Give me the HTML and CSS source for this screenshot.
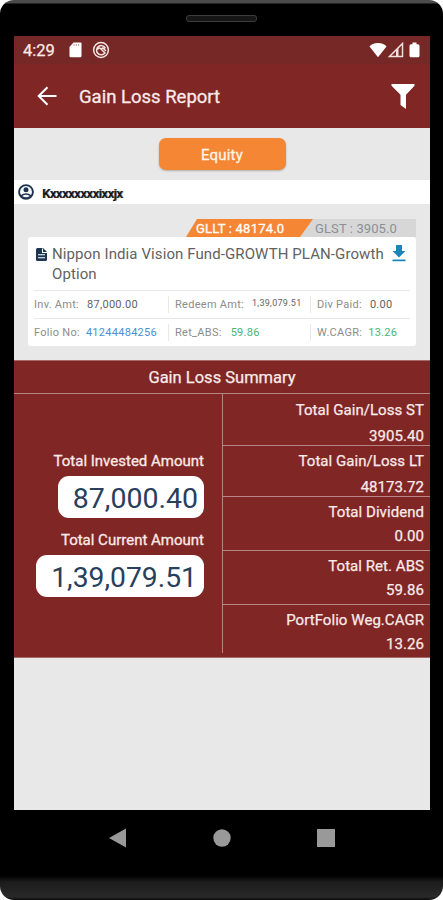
FILE: index.html
```html
<!DOCTYPE html>
<html lang="en">

<head>
    <meta charset="UTF-8">
    <title>Gain Loss Report</title>
    <link rel="stylesheet" href="styles.css">
</head>

<body>
    <div class="phone">
        <div class="speaker"></div>
        <div class="screen">
            <div class="status">
                <span class="time">4:29</span>
                <svg class="sd" width="13" height="16" viewBox="0 0 13 16"><path d="M4.5 0.5H11.5Q12.5 0.5 12.5 1.5V14Q12.5 15.3 11.2 15.3H1.8Q0.5 15.3 0.5 14V5Z" fill="#fff"/><path d="M5 2v2M7.300 2v2M9.600 2v2" stroke="#b98584" stroke-width=".8"/></svg>
                <svg class="app" width="18" height="18" viewBox="0 0 18 18" fill="none" stroke="#f5e3e1" stroke-width="1.5"><circle cx="9" cy="9" r="7.4"/><path d="M12.400 12.500A4.600 4.600 0 1 1 13.400 7.400M5.500 8.500Q7 6 9 8l4.500 4.500M9 8l2-1 3 3"/></svg>
                <svg class="signals" width="53" height="16" viewBox="0 0 53 16"><path d="M0.5 4.5Q3 1 9 1t8.500 3.500L9 15.200Z" fill="#fff"/><path d="M20.500 14.500L33.500 1.500V14.500Z" fill="none" stroke="#f3dedc" stroke-width="1.500"/><path d="M27 14V8.500L29.500 6v8Z" fill="#f3dedc"/><path d="M43.500 .5h4v1.700h1.500q1.500 0 1.500 1.500v10q0 1.600-1.500 1.600h-7q-1.500 0-1.500-1.600v-10q0-1.500 1.500-1.500h1.500Z" fill="#fff"/></svg>
            </div>
            <div class="bar">
                <svg class="back" width="20" height="20" viewBox="0 0 20 20" fill="none" stroke="#fff" stroke-width="2"><path d="M19.500 10H2M10.500 1.200L1.700 10l8.800 8.800"/></svg>
                <h1>Gain Loss Report</h1>
                <svg class="filter" width="24" height="27" viewBox="0 0 24 27"><path d="M0.500 1h23v1.800L15 11.700V26L9.500 22V11.700L0.500 2.800Z" fill="#fff"/></svg>
            </div>

            <div class="type"><button>Equity</button></div>

            <div class="user">
                <svg width="16" height="16" viewBox="0 0 16 16"><circle cx="8" cy="8" r="6.900" fill="#fff" stroke="#1d3450" stroke-width="1.900"/><circle cx="8" cy="5.700" r="2.500" fill="#1d3450"/><path d="M2.500 11.300Q5 9.200 8 9.200t5.500 2.100Q11.500 14.500 8 14.500T2.500 11.300Z" fill="#1d3450"/><path d="M4.200 11.900Q8 9.800 11.800 11.900 8 14.500 4.200 11.900Z" fill="#fff"/></svg>
                <span class="name">Kxxxxxxxxixxjx</span>
            </div>

            <div class="holding">
                <div class="tabs">
                    <span class="gllt">GLLT : 48174.0</span>
                    <span class="glst">GLST : 3905.0</span>
                </div>
                <div class="card">
                    <div class="fund">
                        <svg class="doc" width="11" height="13" viewBox="0 0 11 13"><path d="M1.500 0H7l4 4v7.500Q11 13 9.500 13h-8Q0 13 0 11.500v-10Q0 0 1.500 0Z" fill="#1d3450"/><path d="M6.500 .5v4H11M2 6.800h7M2 9.800h7" fill="none" stroke="#fff" stroke-width="1.100"/></svg>
                        <p>Nippon India Vision Fund-GROWTH PLAN-Growth<br>Option</p>
                        <svg class="down" width="14" height="18" viewBox="0 0 14 18" fill="#1a86ba"><path d="M4 1h6v6h3.500L7 13.500.5 7h3.500ZM0.500 15.500h13v1.800h-13Z"/></svg>
                    </div>
                    <div class="row">
                        <div class="cell"><label>Inv. Amt:</label><b class="inv">87,000.00</b></div>
                        <div class="cell"><label>Redeem Amt:</label><b class="small">1,39,079.51</b></div>
                        <div class="cell"><label>Div Paid:</label><b class="div">0.00</b></div>
                    </div>
                    <div class="row">
                        <div class="cell"><label>Folio No:</label><b class="blue">41244484256</b></div>
                        <div class="cell"><label>Ret_ABS:</label><b class="green">59.86</b></div>
                        <div class="cell"><label>W.CAGR:</label><b class="green cagr">13.26</b></div>
                    </div>
                </div>
            </div>

            <div class="summary">
                <h2>Gain Loss Summary</h2>
                <div class="totals">
                    <div class="amounts">
                        <p>Total Invested Amount</p>
                        <strong>87,000.40</strong>
                        <p>Total Current Amount</p>
                        <strong class="current">1,39,079.51</strong>
                    </div>
                    <div class="list">
                        <div><span>Total Gain/Loss ST</span><span>3905.40</span></div>
                        <div><span>Total Gain/Loss LT</span><span>48173.72</span></div>
                        <div><span>Total Dividend</span><span>0.00</span></div>
                        <div><span>Total Ret. ABS</span><span>59.86</span></div>
                        <div><span>PortFolio Weg.CAGR</span><span>13.26</span></div>
                    </div>
                </div>
            </div>
        </div>
        <div class="nav">
            <svg width="17" height="20" viewBox="0 0 17 20"><path d="M0 10L17 0.500v19Z" fill="#999"/></svg>
            <svg width="18" height="18" viewBox="0 0 18 18"><circle cx="9" cy="9" r="8.700" fill="#999"/></svg>
            <svg width="18" height="18" viewBox="0 0 18 18"><path d="M0 0h18v18H0Z" fill="#999"/></svg>
        </div>
    </div>
</body>

</html>
```
FILE: styles.css
```css
* {
    margin: 0;
    padding: 0;
    box-sizing: border-box;
}

body {
    background: #fff;
    font-family: Roboto, "Liberation Sans", sans-serif;
}

.phone {
    width: 443px;
    height: 900px;
    padding: 0 13px 0 14px;
    border-radius: 14px;
    background: linear-gradient(#4a4a4a 0, #4a4a4a 3px, #000 4px, #000 876px, #1c1c1c 882px, #292929 897px, #080808 900px);
    overflow: hidden;
}

.speaker {
    width: 71px;
    height: 7px;
    margin: 15px 0 14px 172px;
    border: 1px solid #3c3c3c;
    border-radius: 3px;
    background: #161616;
}

.screen {
    height: 774px;
    background: #e8e8e8;
}

.status {
    display: flex;
    align-items: center;
    height: 28px;
    padding: 0 8px 0 9px;
    background: #762826;
    color: #fbeae8;
}

.time {
    width: 46px;
    font-size: 16.5px;
    -webkit-text-stroke: .25px;
}

.app {
    margin-left: 10px;
}

.signals {
    margin-left: auto;
}

.bar {
    display: flex;
    align-items: center;
    height: 64px;
    padding: 0 15px 0 23px;
    background: #802726;
}

.bar h1 {
    margin: 1px 0 0 22px;
    color: #fbeae8;
    font-size: 18.5px;
    font-weight: 400;
    -webkit-text-stroke: .3px;
}

.filter {
    margin-left: auto;
}

.type {
    height: 52px;
    padding-top: 10px;
    text-align: center;
}

.type button {
    width: 127px;
    height: 32px;
    border: 0;
    border-radius: 7px;
    background: #f58634;
    box-shadow: 0 1px 2px rgba(0, 0, 0, .25);
    color: #fff3e8;
    font: 15px Roboto, sans-serif;
    letter-spacing: .2px;
    line-height: 34px;
    -webkit-text-stroke: .3px;
}

.user {
    display: flex;
    align-items: center;
    height: 24px;
    padding-left: 4px;
    background: #fff;
}

.name {
    margin: 2px 0 0 8px;
    color: #111;
    font-size: 13px;
    font-weight: 500;
    letter-spacing: -.45px;
    text-shadow: 1px 0 0 #777;
}

.holding {
    height: 156px;
    padding: 15px 14px 0;
}

.tabs {
    display: flex;
    width: 230px;
    height: 18px;
    margin-left: auto;
    background: linear-gradient(#d7d7d7, #d7d7d7) right / 116px 18px no-repeat;
    font-size: 13px;
    line-height: 19px;
    white-space: nowrap;
}

.gllt {
    width: 127px;
    padding-left: 10px;
    background: #f58634;
    clip-path: polygon(11px 0, 127px 0, 114px 18px, 0 18px);
    color: #fff;
    letter-spacing: .2px;
    -webkit-text-stroke: .3px;
}

.glst {
    padding-left: 2px;
    color: #8b9097;
    letter-spacing: .1px;
}

.card {
    height: 109px;
    padding: 0 6px;
    border-radius: 3px;
    background: #fff;
}

.fund {
    display: flex;
    height: 53px;
    padding: 7px 4px 0 2px;
}

.doc {
    margin-top: 4px;
}

.fund p {
    width: 333px;
    margin-left: 5px;
    color: #626262;
    font-size: 15px;
    letter-spacing: .1px;
    line-height: 20px;
    white-space: nowrap;
}

.down {
    margin-left: auto;
}

.row {
    display: grid;
    grid-template-columns: 134px 142px 1fr;
    height: 28px;
    border-top: 1px solid #e8e8e8;
}

.cell {
    display: flex;
    align-items: center;
    font-size: 11px;
    letter-spacing: .28px;
    white-space: nowrap;
}

.cell + .cell {
    height: 17px;
    margin-top: 5px;
    padding-left: 6px;
    border-left: 1px solid #e8e8e8;
}

.cell label {
    color: #8c8c8c;
}

.cell b {
    margin-left: 6px;
    color: #626262;
    font-weight: 400;
}

.cell .inv,
.cell .small,
.cell .div {
    margin-left: 8px;
}

.cell .small {
    margin-top: -3px;
    font-size: 9px;
}

.cell .blue {
    color: #4a91d2;
}

.cell .green {
    margin-left: 9px;
    color: #47b574;
}

.cell .cagr {
    margin-left: 6px;
}

.summary {
    height: 298px;
    border-top: 1px solid #a66a68;
    border-bottom: 1px solid #a66a68;
    background: #802726;
    color: #fbeae8;
}

.summary h2 {
    height: 33px;
    border-bottom: 1px solid #b98584;
    font-size: 16.5px;
    font-weight: 400;
    line-height: 33px;
    text-align: center;
    -webkit-text-stroke: .25px;
}

.totals {
    display: grid;
    grid-template-columns: 208px 208px;
}

.amounts {
    display: flex;
    flex-direction: column;
    align-items: flex-end;
    padding: 57px 18px 0 0;
}

.amounts p {
    font-size: 15px;
    line-height: 20px;
    -webkit-text-stroke: .3px;
}

.amounts strong {
    width: 146px;
    height: 42px;
    margin: 5px 0 12px;
    padding-right: 6px;
    border-radius: 11px;
    background: #fff;
    color: #29405c;
    font-size: 28.5px;
    font-weight: 400;
    line-height: 45px;
    text-align: right;
}

.amounts .current {
    width: 168px;
    padding-right: 7px;
    font-size: 28.3px;
}

.list {
    height: 259px;
    border-left: 1px solid #b98584;
    font-size: 15px;
    letter-spacing: .05px;
    text-align: right;
    -webkit-text-stroke: .25px;
}

.list div {
    height: 54px;
    padding: 5px 6px 0 0;
    border-bottom: 1px solid #b98584;
    line-height: 20px;
}

.list div:first-child {
    height: 52px;
    padding-top: 6px;
}

.list div:nth-child(2) {
    height: 51px;
}

.list div:last-child {
    height: 48px;
    border: 0;
}

.list span {
    display: block;
    height: 24px;
}

.list div:first-child span,
.list div:nth-child(2) span {
    height: 26px;
}

.nav {
    display: flex;
    align-items: center;
    justify-content: space-between;
    height: 55px;
    padding: 0 95px 0 95px;
}
```
